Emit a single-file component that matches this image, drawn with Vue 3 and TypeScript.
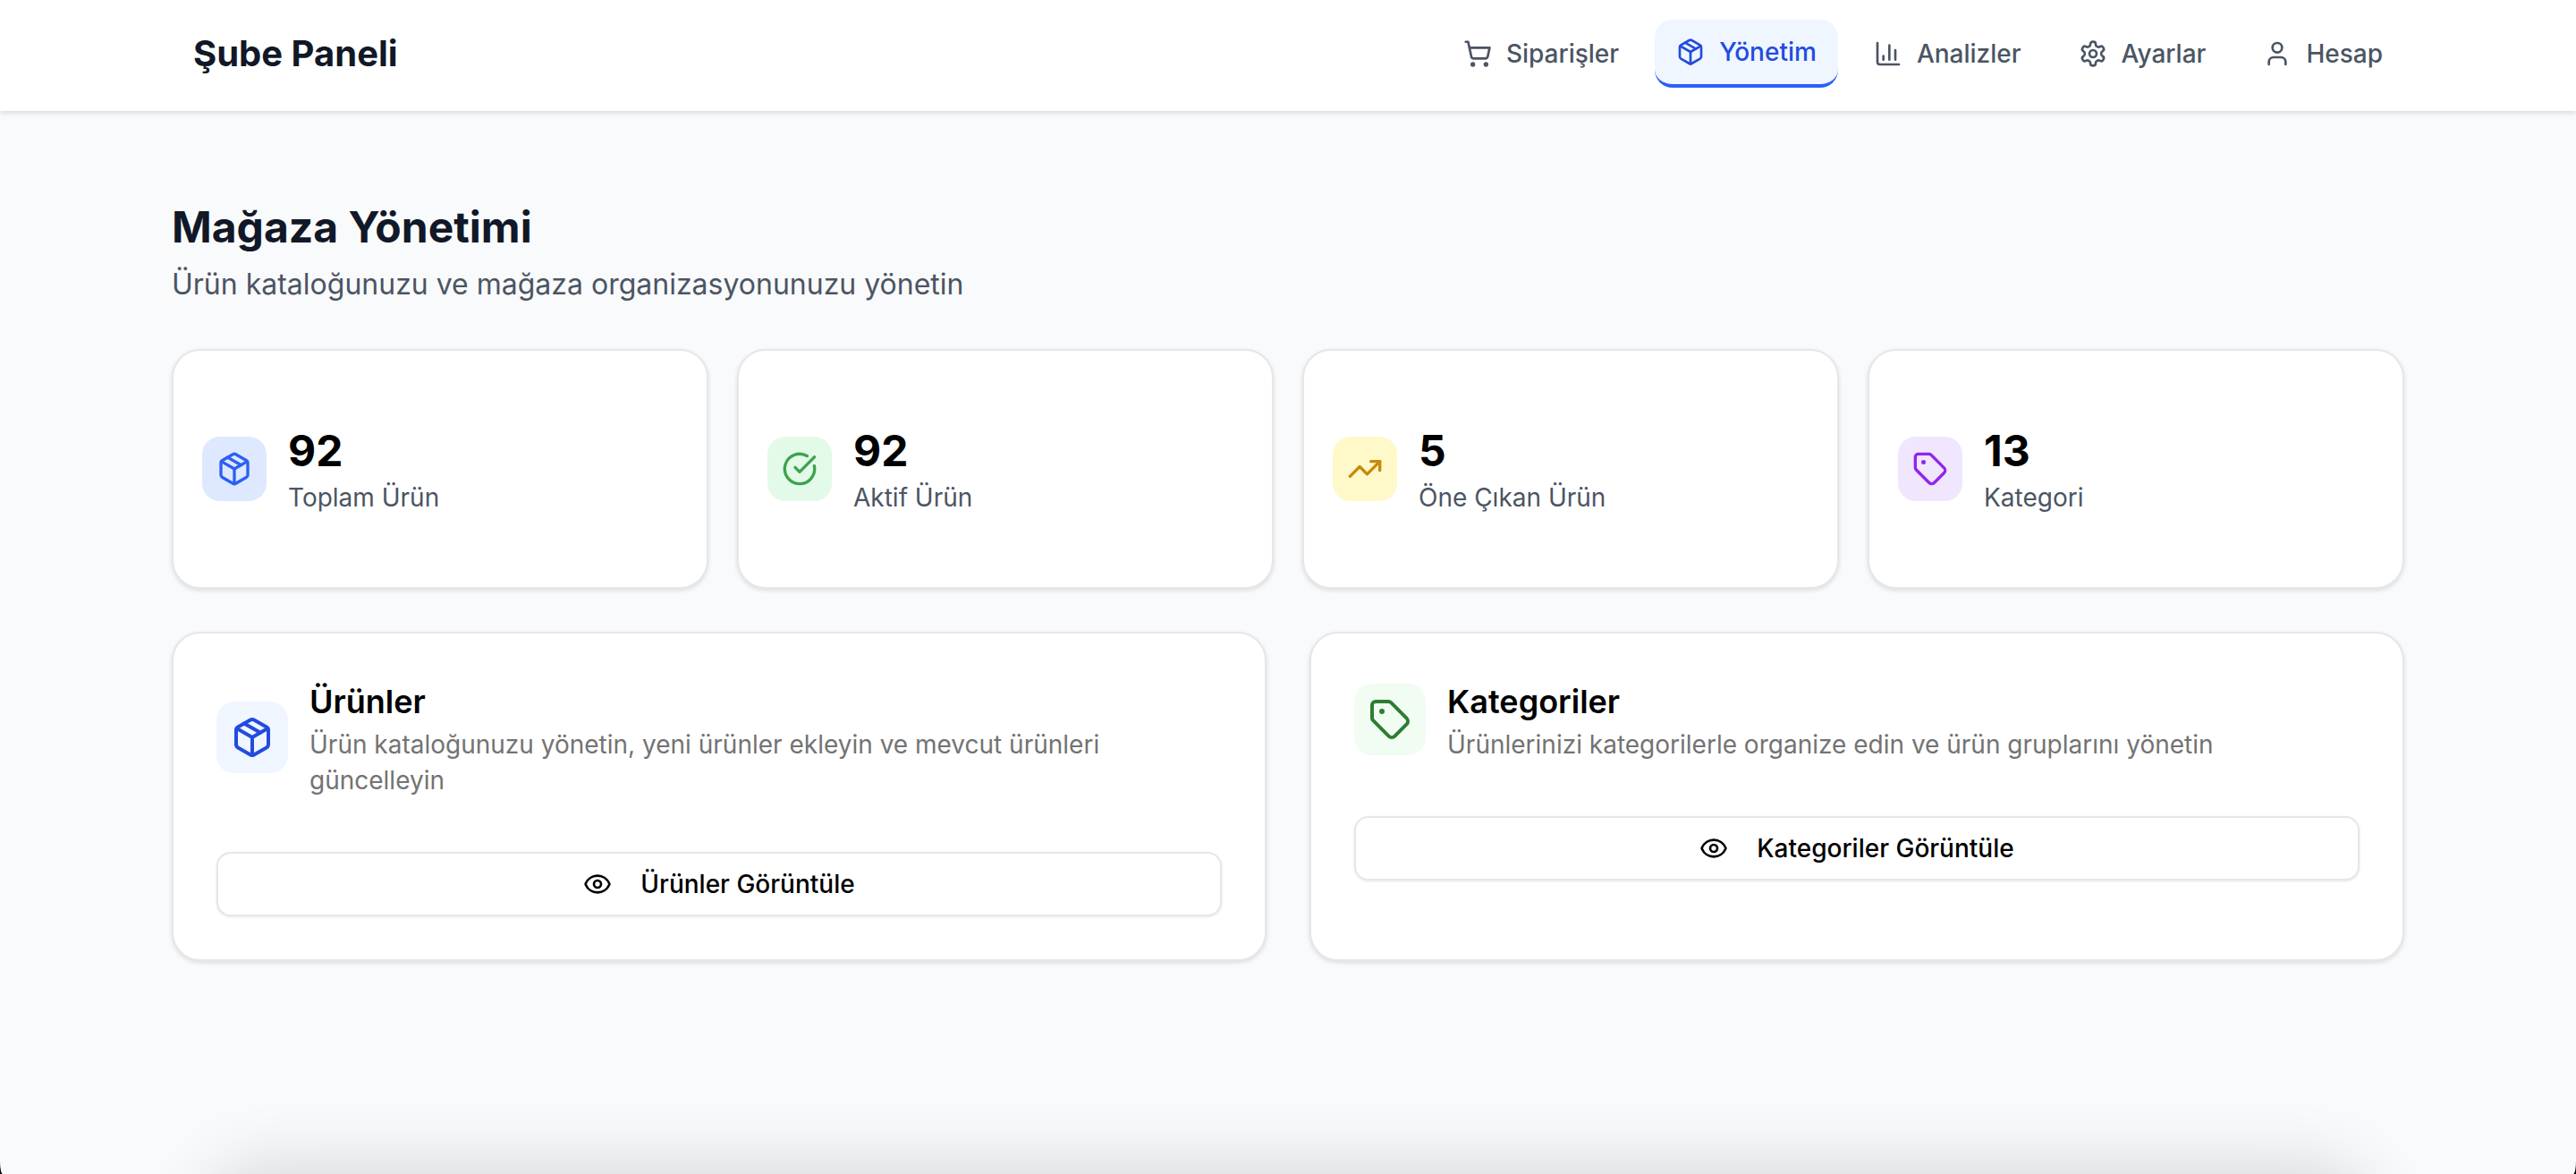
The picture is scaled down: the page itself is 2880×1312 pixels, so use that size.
<script setup lang="ts">
interface NavItem {
  label: string
  icon: string
  active?: boolean
}

interface StatCard {
  value: number
  label: string
  icon: string
  tone: string
}

interface ManageCard {
  title: string
  description: string
  action: string
  icon: string
  tone: string
}

const navItems: NavItem[] = [
  { label: 'Siparişler', icon: 'cart' },
  { label: 'Yönetim', icon: 'package', active: true },
  { label: 'Analizler', icon: 'chart' },
  { label: 'Ayarlar', icon: 'settings' },
  { label: 'Hesap', icon: 'user' }
]

const stats: StatCard[] = [
  { value: 92, label: 'Toplam Ürün', icon: 'package', tone: 'blue' },
  { value: 92, label: 'Aktif Ürün', icon: 'check', tone: 'green' },
  { value: 5, label: 'Öne Çıkan Ürün', icon: 'trend', tone: 'yellow' },
  { value: 13, label: 'Kategori', icon: 'tag', tone: 'purple' }
]

const manageCards: ManageCard[] = [
  {
    title: 'Ürünler',
    description: 'Ürün kataloğunuzu yönetin, yeni ürünler ekleyin ve mevcut ürünleri güncelleyin',
    action: 'Ürünler Görüntüle',
    icon: 'package',
    tone: 'blue'
  },
  {
    title: 'Kategoriler',
    description: 'Ürünlerinizi kategorilerle organize edin ve ürün gruplarını yönetin',
    action: 'Kategoriler Görüntüle',
    icon: 'tag',
    tone: 'green'
  }
]

// lucide outlines, all on a 24 unit grid
const iconPaths: Record<string, string[]> = {
  cart: [
    'M2.05 2.05h2l2.66 12.42a2 2 0 0 0 2 1.58h9.78a2 2 0 0 0 1.95-1.57l1.65-7.43H5.12',
    'M7 21a1 1 0 1 0 2 0a1 1 0 1 0-2 0',
    'M18 21a1 1 0 1 0 2 0a1 1 0 1 0-2 0'
  ],
  package: [
    'M11 21.73a2 2 0 0 0 2 0l7-4A2 2 0 0 0 21 16V8a2 2 0 0 0-1-1.73l-7-4a2 2 0 0 0-2 0l-7 4A2 2 0 0 0 3 8v8a2 2 0 0 0 1 1.73z',
    'M12 22V12',
    'M3.3 7 12 12l8.7-5',
    'm7.5 4.27 9 5.15'
  ],
  chart: ['M3 3v16a2 2 0 0 0 2 2h16', 'M18 17V9', 'M13 17V5', 'M8 17v-3'],
  settings: [
    'M12.22 2h-.44a2 2 0 0 0-2 2v.18a2 2 0 0 1-1 1.73l-.43.25a2 2 0 0 1-2 0l-.15-.08a2 2 0 0 0-2.73.73l-.22.38a2 2 0 0 0 .73 2.73l.15.1a2 2 0 0 1 1 1.72v.51a2 2 0 0 1-1 1.74l-.15.09a2 2 0 0 0-.73 2.73l.22.38a2 2 0 0 0 2.73.73l.15-.08a2 2 0 0 1 2 0l.43.25a2 2 0 0 1 1 1.73V20a2 2 0 0 0 2 2h.44a2 2 0 0 0 2-2v-.18a2 2 0 0 1 1-1.73l.43-.25a2 2 0 0 1 2 0l.15.08a2 2 0 0 0 2.73-.73l.22-.39a2 2 0 0 0-.73-2.73l-.15-.08a2 2 0 0 1-1-1.74v-.5a2 2 0 0 1 1-1.74l.15-.09a2 2 0 0 0 .73-2.73l-.22-.38a2 2 0 0 0-2.73-.73l-.15.08a2 2 0 0 1-2 0l-.43-.25a2 2 0 0 1-1-1.73V4a2 2 0 0 0-2-2z',
    'M9 12a3 3 0 1 0 6 0a3 3 0 1 0-6 0'
  ],
  user: ['M19 21v-2a4 4 0 0 0-4-4H9a4 4 0 0 0-4 4v2', 'M8 7a4 4 0 1 0 8 0a4 4 0 1 0-8 0'],
  check: ['M21.801 10A10 10 0 1 1 17 3.335', 'm9 11 3 3L22 4'],
  trend: ['M22 7 13.5 15.5 8.5 10.5 2 17', 'M16 7h6v6'],
  tag: [
    'M12.586 2.586A2 2 0 0 0 11.172 2H4a2 2 0 0 0-2 2v7.172a2 2 0 0 0 .586 1.414l8.704 8.704a2.426 2.426 0 0 0 3.42 0l6.58-6.58a2.426 2.426 0 0 0 0-3.42z',
    'M7 7.5a.5.5 0 1 0 1 0a.5.5 0 1 0-1 0'
  ],
  eye: [
    'M2.062 12.348a1 1 0 0 1 0-.696 10.75 10.75 0 0 1 19.876 0 1 1 0 0 1 0 .696 10.75 10.75 0 0 1-19.876 0',
    'M9 12a3 3 0 1 0 6 0a3 3 0 1 0-6 0'
  ]
}
</script>

<template>
  <div class="page">
    <header class="topbar">
      <div class="topbar__inner">
        <div class="brand">Şube Paneli</div>
        <nav class="nav">
          <a
            v-for="item in navItems"
            :key="item.label"
            class="nav__item"
            :class="{ 'nav__item--active': item.active }"
          >
            <svg class="nav__icon" viewBox="0 0 24 24" fill="none" stroke="currentColor" stroke-width="2" stroke-linecap="round" stroke-linejoin="round">
              <path v-for="d in iconPaths[item.icon]" :key="d" :d="d" />
            </svg>
            <span>{{ item.label }}</span>
          </a>
        </nav>
      </div>
    </header>

    <main class="main">
      <h1 class="title">Mağaza Yönetimi</h1>
      <p class="subtitle">Ürün kataloğunuzu ve mağaza organizasyonunuzu yönetin</p>

      <section class="stats">
        <div v-for="stat in stats" :key="stat.label" class="card stat">
          <div class="stat__icon" :class="`tone-${stat.tone}`">
            <svg viewBox="0 0 24 24" width="40" height="40" fill="none" stroke="currentColor" stroke-width="2" stroke-linecap="round" stroke-linejoin="round">
              <path v-for="d in iconPaths[stat.icon]" :key="d" :d="d" />
            </svg>
          </div>
          <div>
            <div class="stat__value">{{ stat.value }}</div>
            <div class="stat__label">{{ stat.label }}</div>
          </div>
        </div>
      </section>

      <section class="manage">
        <div v-for="card in manageCards" :key="card.title" class="card manage__card">
          <div class="manage__head">
            <div class="manage__icon" :class="`soft-${card.tone}`">
              <svg viewBox="0 0 24 24" width="48" height="48" fill="none" stroke="currentColor" stroke-width="2" stroke-linecap="round" stroke-linejoin="round">
                <path v-for="d in iconPaths[card.icon]" :key="d" :d="d" />
              </svg>
            </div>
            <div>
              <h2 class="manage__title">{{ card.title }}</h2>
              <p class="manage__text">{{ card.description }}</p>
            </div>
          </div>
          <button type="button" class="manage__button">
            <svg viewBox="0 0 24 24" width="32" height="32" fill="none" stroke="currentColor" stroke-width="2" stroke-linecap="round" stroke-linejoin="round">
              <path v-for="d in iconPaths.eye" :key="d" :d="d" />
            </svg>
            {{ card.action }}
          </button>
        </div>
      </section>
    </main>

    <div class="offscreen-bar"></div>
  </div>
</template>

<style scoped>
.page {
  position: relative;
  height: 1312px;
  overflow: hidden;
  background: #f9fafb;
  border-radius: 0 0 3px 3px / 0 0 14px 14px;
  font-family: Inter, 'Liberation Sans', sans-serif;
}

.topbar {
  height: 124px;
  padding-bottom: 4px;
  box-sizing: border-box;
  background: #fff;
  box-shadow: 0 2px 6px rgba(0, 0, 0, 0.14);
}

.topbar__inner {
  width: 2496px;
  height: 100%;
  margin: 0 auto;
  display: flex;
  align-items: center;
  justify-content: space-between;
}

.brand {
  padding: 0 0 2px 24px;
  font-size: 40px;
  font-weight: 700;
  color: #111827;
}

.nav {
  display: flex;
  align-items: center;
  gap: 16px;
}

.nav__item {
  display: flex;
  align-items: center;
  gap: 16px;
  height: 72px;
  padding: 0 24px;
  border-radius: 20px;
  box-sizing: border-box;
  font-size: 28px;
  font-weight: 500;
  color: #4b5563;
}

.nav__item--active {
  height: 76px;
  background: #eff6ff;
  color: #234be0;
  border-bottom: 4px solid #2c60f5;
}

.nav__icon {
  width: 32px;
  height: 32px;
  flex-shrink: 0;
}

.main {
  width: 2496px;
  margin: 0 auto;
  padding-top: 94px;
}

.title {
  margin: 0;
  font-size: 48px;
  line-height: 72px;
  font-weight: 700;
  color: #111827;
}

.subtitle {
  margin: 4px 0 48px;
  font-size: 32px;
  line-height: 48px;
  color: #4b5563;
}

.card {
  box-sizing: border-box;
  background: #fff;
  border: 2px solid #e5e7eb;
  border-radius: 32px;
  box-shadow: 0 2px 5px rgba(0, 0, 0, 0.12);
}

.stats {
  display: grid;
  grid-template-columns: repeat(4, 1fr);
  gap: 32px;
}

.stat {
  display: flex;
  align-items: center;
  gap: 24px;
  padding: 80px 32px;
}

.stat__icon {
  display: flex;
  align-items: center;
  justify-content: center;
  width: 72px;
  height: 72px;
  border-radius: 20px;
}

.stat__value {
  font-size: 48px;
  line-height: 64px;
  font-weight: 700;
  color: #000;
}

.stat__label {
  font-size: 28px;
  line-height: 40px;
  color: #4b5563;
}

.tone-blue {
  background: #dee8fe;
  color: #2c60f5;
}

.tone-green {
  background: #e3fae8;
  color: #3ba34f;
}

.tone-yellow {
  background: #fff8c9;
  color: #c68a0c;
}

.tone-purple {
  background: #f0e6fd;
  color: #9024f0;
}

.soft-blue {
  background: #eff6ff;
  color: #234be0;
}

.soft-green {
  background: #f1fcf3;
  color: #2e7d32;
}

.manage {
  display: grid;
  grid-template-columns: repeat(2, 1fr);
  gap: 48px;
  margin-top: 48px;
}

.manage__card {
  padding: 48px;
}

.manage__head {
  display: flex;
  align-items: center;
  gap: 24px;
}

.manage__icon {
  display: flex;
  align-items: center;
  justify-content: center;
  flex-shrink: 0;
  width: 80px;
  height: 80px;
  border-radius: 20px;
}

.manage__title {
  margin: 0;
  font-size: 36px;
  line-height: 56px;
  font-weight: 600;
  color: #000;
}

.manage__text {
  margin: 0;
  font-size: 28px;
  line-height: 40px;
  color: #737373;
}

.manage__button {
  display: flex;
  align-items: center;
  justify-content: center;
  gap: 32px;
  width: 100%;
  height: 72px;
  margin-top: 60px;
  background: #fff;
  border: 2px solid #e5e7eb;
  border-radius: 16px;
  box-shadow: 0 1px 3px rgba(0, 0, 0, 0.1);
  font: inherit;
  font-size: 28px;
  font-weight: 500;
  color: #000;
}

/* bar sits just under the fold, only its shadow shows */
.offscreen-bar {
  position: absolute;
  left: 270px;
  right: 270px;
  top: 1348px;
  height: 100px;
  border-radius: 32px;
  box-shadow: 0 0 70px 50px rgba(0, 0, 0, 0.125);
}
</style>

<style>
html,
body {
  background: #000;
}
</style>
